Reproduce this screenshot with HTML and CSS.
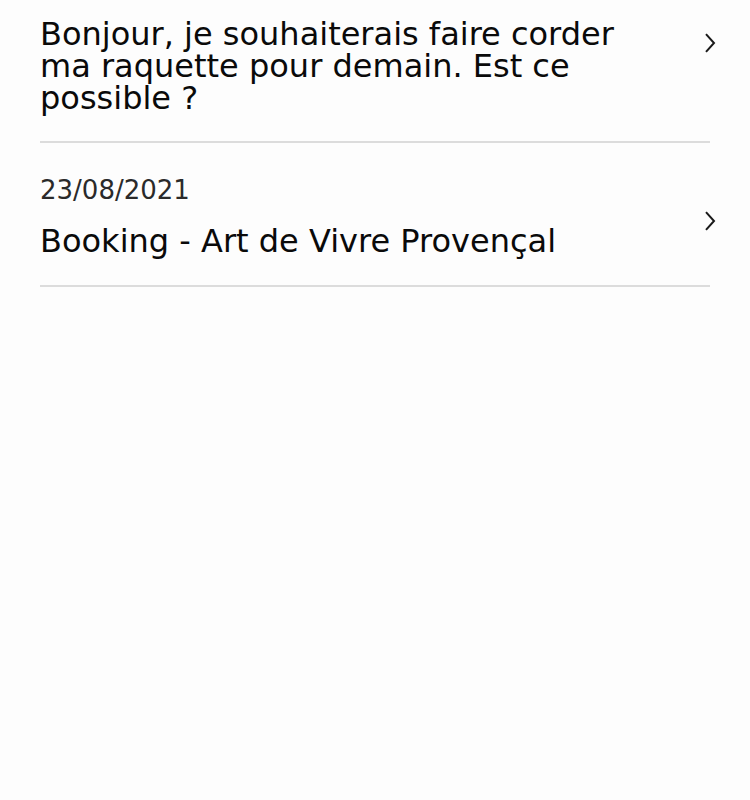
FILE: index.html
```html
<!DOCTYPE html>
<html lang="fr">
<head>
<meta charset="utf-8">
<title>Messages</title>
<link rel="stylesheet" href="styles.css">
</head>
<body>
<ul class="list">
  <li class="item item--top">
    <div class="content">
      <p class="title">Bonjour, je souhaiterais faire corder ma raquette pour demain. Est ce possible ?</p>
    </div>
    <svg class="chevron" viewBox="0 0 12 20" width="12" height="20" aria-hidden="true"><path d="M2 1.2 L10 10 L2 18.8" fill="none" stroke="#1a1a1a" stroke-width="2"/></svg>
  </li>
  <li class="item">
    <div class="content">
      <p class="date">23/08/2021</p>
      <p class="title">Booking - Art de Vivre Provençal</p>
    </div>
    <svg class="chevron" viewBox="0 0 12 20" width="12" height="20" aria-hidden="true"><path d="M2 1.2 L10 10 L2 18.8" fill="none" stroke="#1a1a1a" stroke-width="2"/></svg>
  </li>
</ul>
</body>
</html>
```
FILE: styles.css
```css
html, body {
  margin: 0;
  padding: 0;
  background: #fdfdfd;
}
body {
  font-family: "DejaVu Sans", "Noto Sans", sans-serif;
  color: #0a0a0a;
  width: 750px;
  height: 800px;
}
.list {
  list-style: none;
  margin: 0;
  padding: 0 40px;
}
.item {
  display: flex;
  align-items: center;
  border-bottom: 2px solid #dcdcdc;
  padding: 32px 0 28px;
}
.item--top {
  align-items: flex-start;
  padding: 18px 0 27px;
}
.item--top .chevron {
  margin-top: 15px;
}
.content {
  flex: none;
  width: 590px;
}
.title {
  margin: 0;
  font-size: 32px;
  line-height: 32px;
}
.date {
  margin: 0 0 20px;
  font-size: 26px;
  line-height: 30px;
  color: #2a2a2a;
}
.chevron {
  flex: none;
  margin-left: auto;
  margin-right: -6px;
  margin-top: 10px;
}
```
